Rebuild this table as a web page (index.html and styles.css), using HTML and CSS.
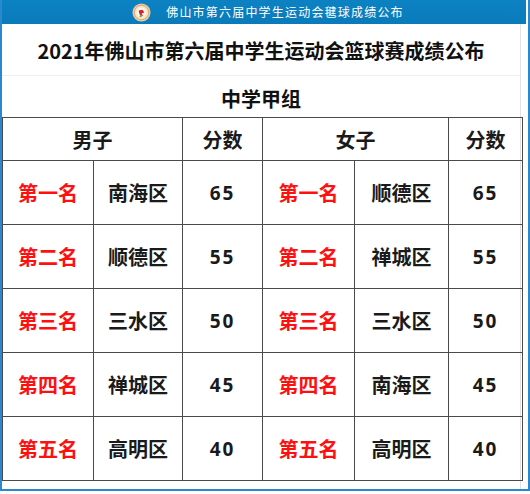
FILE: index.html
```html
<!DOCTYPE html>
<html lang="zh">
<head>
<meta charset="utf-8">
<link rel="stylesheet" href="styles.css">
</head>
<body>
<div class="window">
  <div class="banner">
    <svg class="logo" width="19" height="19" viewBox="0 0 20 20">
      <circle cx="10" cy="10" r="9.5" fill="#e9c9a0"/>
      <circle cx="10" cy="10" r="7.5" fill="#f4e6cf" stroke="#d9a56a" stroke-width="1"/>
      <circle cx="10" cy="10" r="5" fill="#fff5e8"/>
      <path d="M7 8 L11 7 L13 10 L10 11 L12 14 L8 12 Z" fill="#d4202a"/>
      <path d="M9 12 L11 14 L8 15 Z" fill="#3a9a3a"/>
    </svg>
    <span class="banner-text">佛山市第六届中学生运动会毽球成绩公布</span>
  </div>
  <div class="content">
    <h1 class="title">2021年佛山市第六届中学生运动会篮球赛成绩公布</h1>
    <h2 class="group">中学甲组</h2>
    <table class="scores">
      <colgroup>
        <col class="c1"><col class="c2"><col class="c3"><col class="c4"><col class="c5"><col class="c6">
      </colgroup>
      <tr class="head">
        <th colspan="2">男子</th><th>分数</th><th colspan="2">女子</th><th>分数</th>
      </tr>
      <tr><td class="rank">第一名</td><td>南海区</td><td class="num">65</td><td class="rank">第一名</td><td>顺德区</td><td class="num">65</td></tr>
      <tr><td class="rank">第二名</td><td>顺德区</td><td class="num">55</td><td class="rank">第二名</td><td>禅城区</td><td class="num">55</td></tr>
      <tr><td class="rank">第三名</td><td>三水区</td><td class="num">50</td><td class="rank">第三名</td><td>三水区</td><td class="num">50</td></tr>
      <tr><td class="rank">第四名</td><td>禅城区</td><td class="num">45</td><td class="rank">第四名</td><td>南海区</td><td class="num">45</td></tr>
      <tr><td class="rank">第五名</td><td>高明区</td><td class="num">40</td><td class="rank">第五名</td><td>高明区</td><td class="num">40</td></tr>
    </table>
  </div>
</div>
</body>
</html>
```
FILE: styles.css
```css
html, body {
  margin: 0;
  padding: 0;
  background: #ffffff;
  font-family: "Noto Sans CJK SC", "Noto Sans", sans-serif;
}
.window {
  width: 526px;
  height: 489px;
  border-left: 2px solid #2a88d0;
  border-right: 2px solid #2a88d0;
  border-bottom: 2px solid #2a88d0;
  box-sizing: content-box;
  overflow: hidden;
}
.banner {
  height: 24px;
  margin-left: -2px;
  width: 526px;
  background: linear-gradient(#0c82c2, #0a7bba);
  display: flex;
  align-items: center;
  justify-content: center;
  gap: 15px;
}
.logo {
  display: block;
  margin-left: 10px;
}
.banner-text {
  color: #ffffff;
  font-size: 12px;
  letter-spacing: 1.2px;
  line-height: 24px;
}
.content {
  width: 518px;
  border-right: 1px solid #e2e2e2;
  height: 465px;
}
.title {
  margin: 0;
  height: 51px;
  line-height: 54px;
  font-size: 20px;
  font-weight: 700;
  color: #111;
  text-align: center;
  border-bottom: 1px solid #eeeeee;
}
.group {
  margin: 0;
  height: 41px;
  line-height: 46px;
  font-size: 20px;
  font-weight: 700;
  color: #111;
  text-align: center;
}
.scores {
  border-collapse: collapse;
  width: 520px;
  table-layout: fixed;
}
.c1 { width: 91px; }
.c2 { width: 89px; }
.c3 { width: 80px; }
.c4 { width: 92px; }
.c5 { width: 94px; }
.c6 { width: 74px; }
.scores th, .scores td {
  border: 1.5px solid #4a4a4a;
  text-align: center;
  padding: 0;
  font-size: 20px;
  font-weight: 700;
  color: #1a1a1a;
}
.scores tr.head th {
  height: 42px;
}
.scores td {
  height: 63px;
}
.scores td.rank {
  color: #ff1010;
}
.scores td.num {
  font-family: "Open Sans", "Noto Sans", sans-serif;
  letter-spacing: 2px;
  font-size: 19px;
}
```
